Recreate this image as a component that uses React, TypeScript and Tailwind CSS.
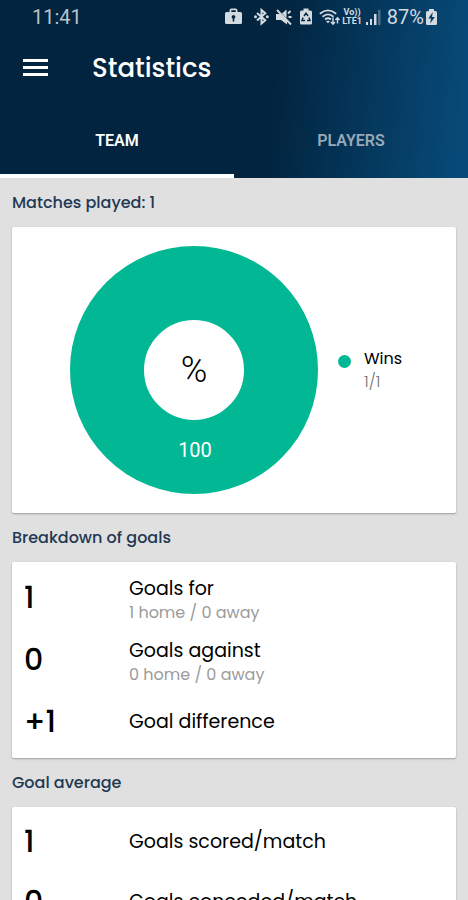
import type { ReactNode } from "react";

type Stat = {
  value: string;
  label: string;
  detail?: string;
};

type StatCardProps = {
  stats: ReadonlyArray<Stat>;
  compact?: boolean;
};

const breakdown: Stat[] = [
  { value: "1", label: "Goals for", detail: "1 home / 0 away" },
  { value: "0", label: "Goals against", detail: "0 home / 0 away" },
  { value: "+1", label: "Goal difference" },
];

const averages: Stat[] = [
  { value: "1", label: "Goals scored/match" },
  { value: "0", label: "Goals conceded/match" },
];

function StatusBar() {
  return (
    <div className="flex h-[34px] items-center justify-between pl-8 pr-[31px] font-[Roboto,sans-serif] text-xl leading-6 text-[#b9c3cc]">
      <time>11:41</time>
      <div className="flex items-center text-[#d3dae0]">
        {/* work profile */}
        <svg className="mr-3 h-[18px] w-[17px]" viewBox="0 0 17 18" fill="currentColor">
          <path fillRule="evenodd" d="M4.500 4V2.500Q4.500 .5 6.500 .5H10.500Q12.500 .5 12.500 2.500V4H15.500Q17 4 17 5.500V14.500Q17 16 15.500 16H1.500Q0 16 0 14.500V5.500Q0 4 1.500 4ZM6.300 4H10.700V2.300H6.300ZM8.500 7A1.900 1.900 0 0 0 7.700 10.600V13.500H9.300V10.600A1.900 1.900 0 0 0 8.500 7Z" />
        </svg>
        {/* bluetooth */}
        <svg className="mr-[7px] h-[18px] w-[15px]" viewBox="0 0 15 18" fill="none" stroke="currentColor" strokeWidth="2">
          <path d="M3 5 11.300 12.300 7.500 15.500V2L11.300 5.300 3 12.500" />
          <circle cx="1.500" cy="8.800" r="1.500" fill="currentColor" stroke="none" />
          <circle cx="13.300" cy="8.800" r="1.500" fill="currentColor" stroke="none" />
        </svg>
        {/* muted */}
        <svg className="mr-2 h-[18px] w-4" viewBox="0 0 16 18" fill="currentColor">
          <path d="M0 6H4L11 13V16.500L5 12H0Z" />
          <path d="M6 5.500 10.500 1.500V10Z" />
          <path d="M1 2 15 16.500M12 5.500 14.500 3M12.500 9H15.500" stroke="currentColor" strokeWidth="1.800" />
        </svg>
        {/* battery saver */}
        <svg className="mr-[7px] h-[18px] w-3" viewBox="0 0 12 18">
          <path d="M3.500 .5H8.500V2.500H10.500Q12 2.500 12 4V15Q12 16.500 10.500 16.500H1.500Q0 16.500 0 15V4Q0 2.500 1.500 2.500H3.500Z" fill="currentColor" />
          <path d="M4 8 6 5.200 8 8M9 9.500 10 12.500H7M5 12.500H2L3 9.500" fill="none" stroke="#02243f" strokeWidth="1.400" />
        </svg>
        {/* wifi */}
        <svg className="mr-0.5 h-[18px] w-[21px]" viewBox="0 0 21 18" fill="none" stroke="currentColor" strokeWidth="1.800">
          <path d="M.8 5.800Q9 -1 17.200 5.800M3.500 8.700Q9 4 14.500 8.700M6 11.500Q9 9 12 11.500" />
          <path d="M7 13.300Q9 12 11 13.300L9 15.300Z" fill="currentColor" stroke="none" />
          <path d="M14 9.500V16M12 14 14 16.200 16 14M18.500 15.500V10M16.500 12 18.500 9.800 20.500 12" strokeWidth="1.400" />
        </svg>
        <div className="mr-1 text-center text-[9px] font-bold leading-[9px]">
          <div>Vo))</div>
          <div>LTE1</div>
        </div>
        {/* signal */}
        <svg className="mr-1.5 h-[18px] w-[15px]" viewBox="0 0 15 18" fill="currentColor">
          <path d="M0 14H2V17H0ZM4 11H6V17H4ZM8 6H10.500V17H8Z" />
          <path d="M12 2H14.500V17H12Z" opacity=".35" />
        </svg>
        <span>87%</span>
        {/* charging battery */}
        <svg className="ml-0.5 h-[18px] w-[11px]" viewBox="0 0 11 18">
          <path d="M3 1H8V3H9.500Q11 3 11 4.500V15.500Q11 17 9.500 17H1.500Q0 17 0 15.500V4.500Q0 3 1.500 3H3Z" fill="currentColor" />
          <path d="M6.800 4 2.300 10.500H5L4.200 15.500 8.800 9H6Z" fill="#053a63" />
        </svg>
      </div>
    </div>
  );
}

function SectionTitle({ children }: { children: ReactNode }) {
  return <h2 className="flex h-[49px] items-center text-base font-medium text-[#1f3853]">{children}</h2>;
}

function StatCard({ stats, compact }: StatCardProps) {
  return (
    <dl className="rounded-xs bg-white px-3 py-[5px] shadow-[0_1px_2px_rgba(0,0,0,0.3)]">
      {stats.map((stat) => (
        <div key={stat.label} className={compact ? "flex h-[60px] items-center" : "flex h-[62px] items-center"}>
          <dd className="w-[105px] shrink-0 text-3xl font-medium text-black">{stat.value}</dd>
          <dt className={stat.detail ? "pt-1.5 text-[19px] leading-6 text-black" : "text-[19px] leading-6 text-black"}>
            {stat.label}
            {stat.detail && <span className="block text-base leading-6 text-[#9b9b9b]">{stat.detail}</span>}
          </dt>
        </div>
      ))}
    </dl>
  );
}

export default function App() {
  return (
    <div className="flex h-screen flex-col bg-[#e0e0e0] font-[Poppins,Inter,sans-serif]">
      <header className="shrink-0 bg-[linear-gradient(95deg,#02243f_58%,#074a78_98%)] text-white">
        <StatusBar />
        <div className="flex h-[68px] items-center gap-11 px-[23px]">
          <button type="button" aria-label="Open menu">
            <svg className="h-5 w-[25px]" viewBox="0 0 25 20" fill="currentColor">
              <path d="M0 1H25V4H0ZM0 8H25V11H0ZM0 15H25V18H0Z" />
            </svg>
          </button>
          <h1 className="text-[26px] font-medium">Statistics</h1>
        </div>
        <div role="tablist" className="grid h-[76px] grid-cols-2 font-[Roboto,sans-serif] text-base font-semibold">
          <button type="button" role="tab" aria-selected="true" className="border-b-4 border-white pt-1.5">
            TEAM
          </button>
          <button type="button" role="tab" aria-selected="false" className="border-b-4 border-transparent pt-1.5 text-[#98a9b8]">
            PLAYERS
          </button>
        </div>
      </header>

      <main className="min-h-0 flex-1 overflow-y-auto px-3 [scrollbar-width:none]">
        <SectionTitle>Matches played: 1</SectionTitle>
        <section className="flex items-center gap-5 rounded-xs bg-white py-[19px] pl-[58px] shadow-[0_1px_2px_rgba(0,0,0,0.3)]">
          <svg className="size-[248px] shrink-0 font-[Roboto,sans-serif]" viewBox="0 0 248 248" textAnchor="middle">
            <circle cx="124" cy="124" r="87" fill="none" stroke="#02b894" strokeWidth="74" />
            <text x="124" y="136" fontSize="36" fontWeight="300">
              %
            </text>
            <text x="125" y="211" fontSize="20" fill="#fff">
              100
            </text>
          </svg>
          <div className="flex gap-[13px]">
            <span className="mt-2 size-[13px] rounded-full bg-[#02b894]" />
            <div className="text-base leading-[23px]">
              <div>Wins</div>
              <div className="font-light text-[#777777]">1/1</div>
            </div>
          </div>
        </section>

        <SectionTitle>Breakdown of goals</SectionTitle>
        <StatCard stats={breakdown} />

        <SectionTitle>Goal average</SectionTitle>
        <StatCard stats={averages} compact />
      </main>
    </div>
  );
}
